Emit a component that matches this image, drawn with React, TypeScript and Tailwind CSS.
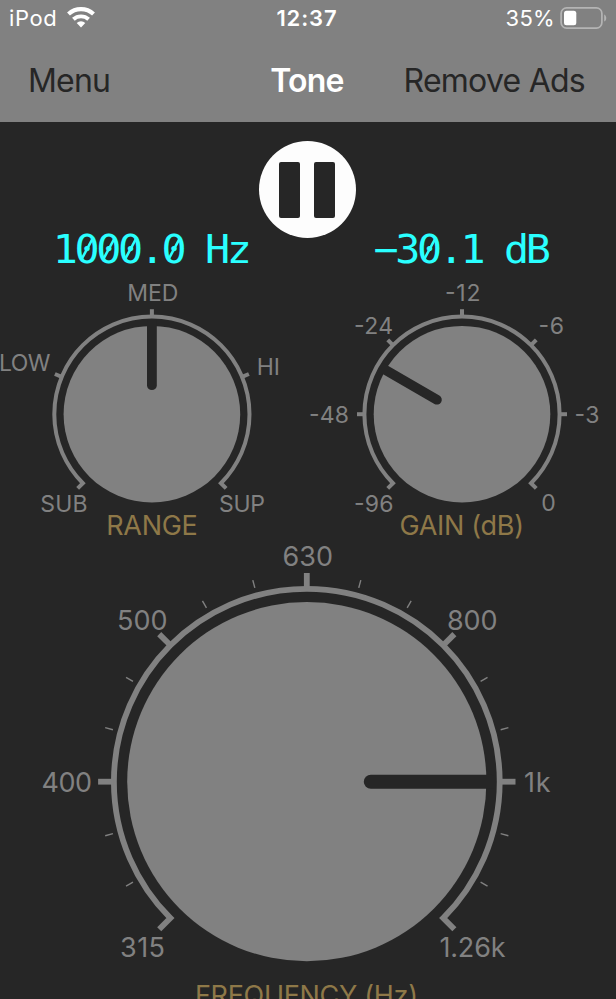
interface Label {
  text: string;
  x: number;
  y: number;
  width: number;
}

interface DialProps {
  cx: number;
  cy: number;
  bodyRadius: number;
  ringRadius: number;
  ringWidth: number;
  tickEnd: number;
  ticks: number[];
  minorTicks?: number[];
  pointer: { angle: number; start: number; width: number };
  labels: Label[];
  labelSize: number;
  title: Label;
}

// Angles are in degrees, clockwise from the top of the dial.
function polar(cx: number, cy: number, r: number, angle: number) {
  const rad = (angle * Math.PI) / 180;
  return { x: cx + r * Math.sin(rad), y: cy - r * Math.cos(rad) };
}

function Dial(props: DialProps) {
  const { cx, cy, bodyRadius, ringRadius, ringWidth, tickEnd, pointer, title } = props;
  const at = (r: number, angle: number) => {
    const p = polar(cx, cy, r, angle);
    return `${p.x} ${p.y}`;
  };
  const ring = `M${at(tickEnd, -135)} L${at(ringRadius, -135)} A${ringRadius} ${ringRadius} 0 1 1 ${at(ringRadius, 135)} L${at(tickEnd, 135)}`;

  return (
    <g>
      <circle cx={cx} cy={cy} r={bodyRadius} className="fill-[#818181]" />
      <path
        d={`M${at(pointer.start, pointer.angle)} L${at(bodyRadius + 4, pointer.angle)}`}
        strokeWidth={pointer.width}
        strokeLinecap="round"
        className="stroke-[#262626]"
      />
      <path d={ring} fill="none" strokeWidth={ringWidth} className="stroke-[#818181]" />
      {props.ticks.map((a) => (
        <path key={a} d={`M${at(ringRadius, a)} L${at(tickEnd, a)}`} strokeWidth={ringWidth} className="stroke-[#818181]" />
      ))}
      {props.minorTicks?.map((a) => (
        <path key={a} d={`M${at(tickEnd - 8, a)} L${at(tickEnd, a)}`} strokeWidth={1.4} className="stroke-[#818181]" />
      ))}
      {props.labels.map((l) => (
        <text key={l.text} x={l.x} y={l.y} textLength={l.width} fontSize={props.labelSize} className="fill-[#818181]">
          {l.text}
        </text>
      ))}
      <text x={title.x} y={title.y} textLength={title.width} fontSize={27} className="fill-[#8e7848]">
        {title.text}
      </text>
    </g>
  );
}

function RangeDial() {
  return (
    <svg viewBox="0 280 308 260" className="block h-[260px] w-[308px] overflow-visible">
      <Dial
        cx={151.9}
        cy={414.2}
        bodyRadius={88.3}
        ringRadius={97.6}
        ringWidth={4}
        tickEnd={105}
        ticks={[-67.5, 0, 67.5]}
        pointer={{ angle: 0, start: 29, width: 9.8 }}
        labelSize={23}
        labels={[
          { text: "SUB", x: 40.3, y: 512.3, width: 47.3 },
          { text: "LOW", x: -1, y: 371, width: 51.5 },
          { text: "MED", x: 127.3, y: 301, width: 51 },
          { text: "HI", x: 256.7, y: 374.7, width: 23.3 },
          { text: "SUP", x: 219, y: 512.3, width: 46 },
        ]}
        title={{ text: "RANGE", x: 106.3, y: 534.5, width: 91.5 }}
      />
    </svg>
  );
}

function GainDial() {
  return (
    <svg viewBox="308 280 308 260" className="block h-[260px] w-[308px] overflow-visible">
      <Dial
        cx={462}
        cy={414.2}
        bodyRadius={88.3}
        ringRadius={97.6}
        ringWidth={4}
        tickEnd={105}
        ticks={[-90, -45, 0, 45, 90]}
        pointer={{ angle: -60, start: 29, width: 9.8 }}
        labelSize={23}
        labels={[
          { text: "-96", x: 354, y: 512.3, width: 39.5 },
          { text: "-48", x: 309, y: 423, width: 40 },
          { text: "-24", x: 354, y: 334.2, width: 39 },
          { text: "-12", x: 445, y: 301, width: 35.5 },
          { text: "-6", x: 538.5, y: 334.2, width: 25.5 },
          { text: "-3", x: 574.5, y: 423, width: 25 },
          { text: "0", x: 541.3, y: 510.5, width: 14.5 },
        ]}
        title={{ text: "GAIN (dB)", x: 399.5, y: 534.5, width: 124.5 }}
      />
    </svg>
  );
}

function FrequencyDial() {
  return (
    <svg viewBox="0 540 616 480" className="block h-[480px] w-[616px] shrink-0">
      <Dial
        cx={306.8}
        cy={781.7}
        bodyRadius={179.6}
        ringRadius={192.9}
        ringWidth={5.8}
        tickEnd={208.7}
        ticks={[-90, -45, 0, 45, 90]}
        minorTicks={[-120, -105, -75, -60, -30, -15, 15, 30, 60, 75, 105, 120]}
        pointer={{ angle: 90, start: 64, width: 14 }}
        labelSize={27}
        labels={[
          { text: "315", x: 120, y: 957, width: 45 },
          { text: "400", x: 41.5, y: 792, width: 50.5 },
          { text: "500", x: 117, y: 630, width: 50.5 },
          { text: "630", x: 282.5, y: 566, width: 50.5 },
          { text: "800", x: 447, y: 630, width: 50.5 },
          { text: "1k", x: 524, y: 792, width: 26.5 },
          { text: "1.26k", x: 439.5, y: 957, width: 66 },
        ]}
        title={{ text: "FREQUENCY (Hz)", x: 195, y: 1005, width: 223 }}
      />
    </svg>
  );
}

const CELL = 21.75;
const STRETCH = 1.16;

function Readout({ text, x }: { text: string; x: number }) {
  const chars = text.split("");
  return (
    <svg viewBox="0 0 308 50" className="block h-[50px] w-[308px] overflow-visible">
      <g transform={`translate(0 33.3) scale(${STRETCH} 1.1)`}>
        <text
          x={chars.map((_, i) => (x - 1.2 + i * CELL) / STRETCH).join(" ")}
          y="0"
          fontSize="36"
          xmlSpace="preserve"
          className="fill-[#2affff] font-['DejaVu_Sans_Mono',monospace]"
        >
          {text}
        </text>
      </g>
      {/* slashed zeros */}
      {chars.map((c, i) =>
        c === "0" ? (
          <path
            key={i}
            d={`M${x + i * CELL + 5.5} 30 L${x + i * CELL + 17} 8.5`}
            strokeWidth="2.6"
            className="stroke-[#2affff]"
          />
        ) : null,
      )}
    </svg>
  );
}

function WifiIcon() {
  return (
    <svg viewBox="0 0 30 22" className="block h-[22px] w-[30px]" fill="none" stroke="white" strokeWidth="4.2">
      <path d="M2.5 7 A18.4 18.4 0 0 1 27.5 7" />
      <path d="M7.4 12.3 A11.2 11.2 0 0 1 22.6 12.3" strokeWidth="3.9" />
      <path d="M10.7 16 A6.3 6.3 0 0 1 19.3 16 L15 20.6 Z" fill="white" stroke="none" />
    </svg>
  );
}

function BatteryIcon() {
  return (
    <svg viewBox="0 0 48 22" className="block h-[22px] w-[48px]">
      <rect x="1.1" y="0.9" width="40.8" height="20.2" rx="5.5" fill="none" stroke="#b4b4b4" strokeWidth="1.7" />
      <rect x="4" y="3.8" width="12.3" height="14.4" rx="2.5" fill="white" />
      <path d="M44.2 7.4 C46.9 8.6 46.9 13.4 44.2 14.6 Z" fill="#b4b4b4" />
    </svg>
  );
}

function Header() {
  return (
    <header className="flex h-[122px] shrink-0 flex-col bg-[#818181]">
      <div className="grid h-9 shrink-0 grid-cols-[1fr_auto_1fr] items-center text-[22px] leading-none text-white">
        <div className="flex items-center gap-[9px] pl-[9px]">
          <span className="tracking-[0.6px]">iPod</span>
          <WifiIcon />
        </div>
        <span className="pr-[2px] font-semibold tracking-[0.9px]">12:37</span>
        <div className="flex items-center justify-end gap-[5px] pr-[8px]">
          <span className="tracking-[0.3px]">35%</span>
          <BatteryIcon />
        </div>
      </div>
      <nav className="grid h-[86px] shrink-0 grid-cols-[1fr_auto_1fr] items-center pt-[3px] text-[32px] leading-none text-[#262626]">
        <button className="justify-self-start pl-[28px] tracking-[-0.8px]">Menu</button>
        <h1 className="pr-[2px] font-semibold tracking-[-0.8px] text-white">Tone</h1>
        <button className="justify-self-end pr-[31px] tracking-[-0.75px]">Remove Ads</button>
      </nav>
    </header>
  );
}

export default function App() {
  return (
    <div className="flex h-[999px] w-[616px] flex-col overflow-hidden bg-[#262626] font-['Inter',sans-serif]">
      <Header />
      <main className="flex flex-col">
        <div className="flex h-[108px] justify-center pt-[19px] pr-[2px]">
          <button aria-label="Pause" className="flex size-[97px] shrink-0 items-center justify-center gap-[14px] rounded-full bg-[#fdfdfd]">
            <span className="h-[56px] w-[21px] rounded-[2px] bg-[#262626]" />
            <span className="h-[56px] w-[21px] rounded-[2px] bg-[#262626]" />
          </button>
        </div>
        <div className="flex h-[50px]">
          <Readout text="1000.0 Hz" x={53.9} />
          <Readout text="−30.1 dB" x={66.8} />
        </div>
        <div className="flex">
          <RangeDial />
          <GainDial />
        </div>
        <FrequencyDial />
      </main>
    </div>
  );
}
